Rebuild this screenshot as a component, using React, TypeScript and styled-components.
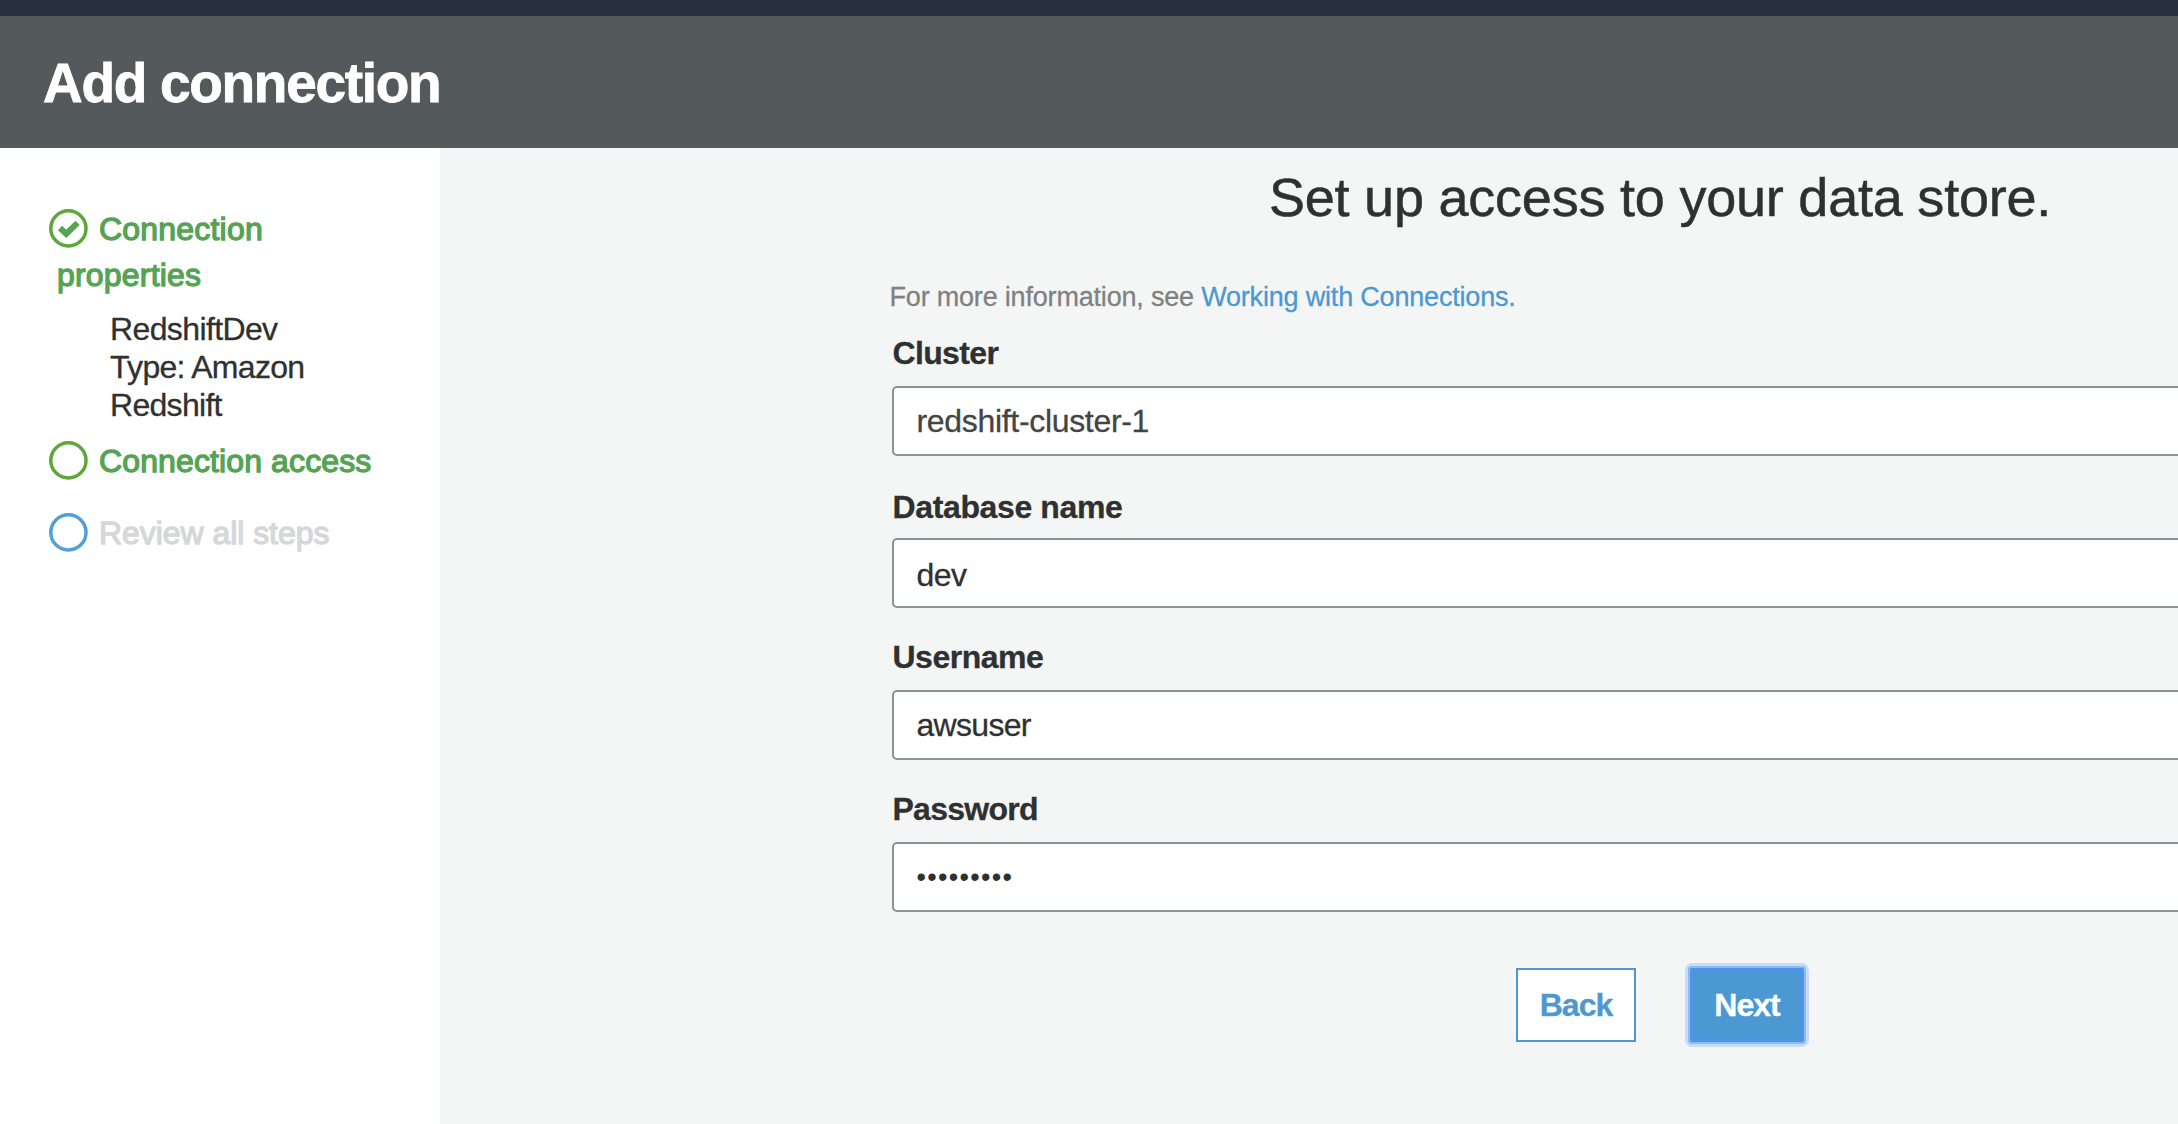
import React from 'react';
import styled, { createGlobalStyle } from 'styled-components';

const GlobalStyle = createGlobalStyle`
  * { box-sizing: border-box; }
  html, body { margin: 0; overflow: hidden; }
  body {
    background: #f4f6f6;
    color: #2f3130;
    font-family: "Liberation Sans", Arial, sans-serif;
    font-size: 32px;
    -webkit-text-stroke: 0.3px currentColor;
  }
`;

const Page = styled.div`
  display: flex;
  flex-direction: column;
  height: 100vh;
  overflow: hidden;
`;

const TopBar = styled.div`
  flex: none;
  height: 16px;
  background: #262f3e;
`;

const Header = styled.header`
  flex: none;
  display: flex;
  align-items: center;
  height: 132px;
  padding: 2px 0 0 43px;
  background: #545a5c;
`;

const Title = styled.h1`
  margin: 0;
  color: #fff;
  font-size: 55px;
  line-height: 64px;
  letter-spacing: -1.3px;
  -webkit-text-stroke: 0.8px #fff;
`;

const Body = styled.div`
  display: flex;
  flex: 1;
  min-height: 0;
`;

const Sidebar = styled.nav`
  flex: none;
  width: 440px;
  padding: 58px 50px 0 57px;
  background: #fff;
`;

const Step = styled.div<{ $color: string; $gap: number; $spacing: number }>`
  margin-top: ${(p) => p.$gap}px;
  color: ${(p) => p.$color};
  line-height: 46px;
  letter-spacing: ${(p) => p.$spacing}px;
  -webkit-text-stroke: 1.3px ${(p) => p.$color};
`;

const StepIcon = styled.svg`
  width: 39px;
  height: 39px;
  margin: 0 11px 0 -8px;
  vertical-align: -8px;
  fill: none;
`;

const Details = styled.div`
  margin-top: 12px;
  padding-left: 53px;
  line-height: 38px;
`;

const Detail = styled.div<{ $spacing: number }>`
  letter-spacing: ${(p) => p.$spacing}px;
`;

const Main = styled.main`
  flex: 1;
  min-width: 0;
  padding: 17px 0 0 452px;
  overflow: hidden;
`;

const Form = styled.div`
  width: 1536px;
`;

const Heading = styled.h2`
  margin: 0;
  font-size: 54px;
  font-weight: 400;
  line-height: 64px;
  letter-spacing: -0.22px;
  text-align: center;
  -webkit-text-stroke: 0.5px currentColor;
`;

const Info = styled.p`
  margin: 50px 0 18px -2.5px;
  color: #808180;
  font-size: 27px;
  line-height: 36px;
  letter-spacing: -0.19px;
`;

const Link = styled.a`
  color: #4c98d3;
  text-decoration: none;
`;

const Field = styled.div<{ $gap: number }>`
  display: flex;
  flex-direction: column;
  margin-top: ${(p) => p.$gap}px;
`;

const Label = styled.label<{ $gap: number; $spacing: number }>`
  margin-bottom: ${(p) => p.$gap}px;
  padding-left: 0.5px;
  font-weight: 700;
  line-height: 40px;
  letter-spacing: ${(p) => p.$spacing}px;
`;

const Value = styled.div<{ $color: string; $shift: number; $spacing: number }>`
  height: 70px;
  padding: ${(p) => p.$shift}px 22.5px 0;
  border: 2px solid #8d9297;
  border-radius: 5px;
  background: #fff;
  color: ${(p) => p.$color};
  line-height: 66px;
  letter-spacing: ${(p) => p.$spacing}px;
`;

const MaskedValue = styled(Value)`
  font-size: 27px;
  line-height: 67px;
  -webkit-text-stroke: 0;
`;

const Actions = styled.div`
  display: flex;
  align-items: center;
  justify-content: center;
  gap: 49px;
  margin-top: 51px;
  padding-left: 5px;
`;

const Button = styled.button`
  width: 120px;
  height: 74px;
  padding: 0;
  border: 2px solid #4c98d3;
  background: #fff;
  color: #4c98d3;
  font: 700 32px "Liberation Sans", Arial, sans-serif;
  letter-spacing: -1px;
`;

const FocusedButton = styled(Button)`
  width: 124px;
  height: 84px;
  border: 3px solid #c8dcf8;
  border-radius: 7px;
  background: #4c98d3;
  color: #fff;
  box-shadow: inset 0 0 0 2px #8ebaf6, inset 0 0 4px 5px #4f95e9;
`;

const GREEN = '#55a353';

const fields = [
  { label: 'Cluster', value: 'redshift-cluster-1', gap: 0, labelGap: 13, ls: -0.65, vs: -0.32, shift: 0, color: '#444444' },
  { label: 'Database name', value: 'dev', gap: 31, labelGap: 11, ls: -0.37, vs: -0.5, shift: 2, color: '#2f3130' },
  { label: 'Username', value: 'awsuser', gap: 29, labelGap: 13, ls: -0.5, vs: -0.7, shift: 0, color: '#2f3130' },
  { label: 'Password', value: '•••••••••', gap: 29, labelGap: 13, ls: -0.75, vs: 1.3, shift: 0, color: '#2f3130', masked: true },
];

function StatusIcon({ color, done }: { color: string; done?: boolean }) {
  return (
    <StepIcon viewBox="0 0 39 39">
      <circle cx="19.4" cy="19.4" r="17.6" stroke={color} strokeWidth="3.5" />
      {done && <path d="M11 19 L17.2 24.8 L28.6 13.8" stroke={GREEN} strokeWidth="6" />}
    </StepIcon>
  );
}

export default function App() {
  return (
    <Page>
      <GlobalStyle />
      <TopBar />
      <Header>
        <Title>Add connection</Title>
      </Header>
      <Body>
        <Sidebar>
          <Step $color={GREEN} $gap={0} $spacing={0.2}>
            <StatusIcon color="#5ea73c" done />
            Connection properties
          </Step>
          <Details>
            <Detail $spacing={-0.62}>RedshiftDev</Detail>
            <Detail $spacing={-0.7}>Type: Amazon Redshift</Detail>
          </Details>
          <Step $color={GREEN} $gap={14} $spacing={0.12}>
            <StatusIcon color="#5ea73c" />
            Connection access
          </Step>
          <Step $color="#d5d8d8" $gap={26} $spacing={-0.05}>
            <StatusIcon color="#539fd7" />
            Review all steps
          </Step>
        </Sidebar>
        <Main>
          <Form>
            <Heading>Set up access to your data store.</Heading>
            <Info>
              For more information, see <Link>Working with Connections.</Link>
            </Info>
            {fields.map((f) => {
              const Box = f.masked ? MaskedValue : Value;
              return (
                <Field key={f.label} $gap={f.gap}>
                  <Label $gap={f.labelGap} $spacing={f.ls}>{f.label}</Label>
                  <Box $color={f.color} $shift={f.shift} $spacing={f.vs}>{f.value}</Box>
                </Field>
              );
            })}
            <Actions>
              <Button>Back</Button>
              <FocusedButton>Next</FocusedButton>
            </Actions>
          </Form>
        </Main>
      </Body>
    </Page>
  );
}
